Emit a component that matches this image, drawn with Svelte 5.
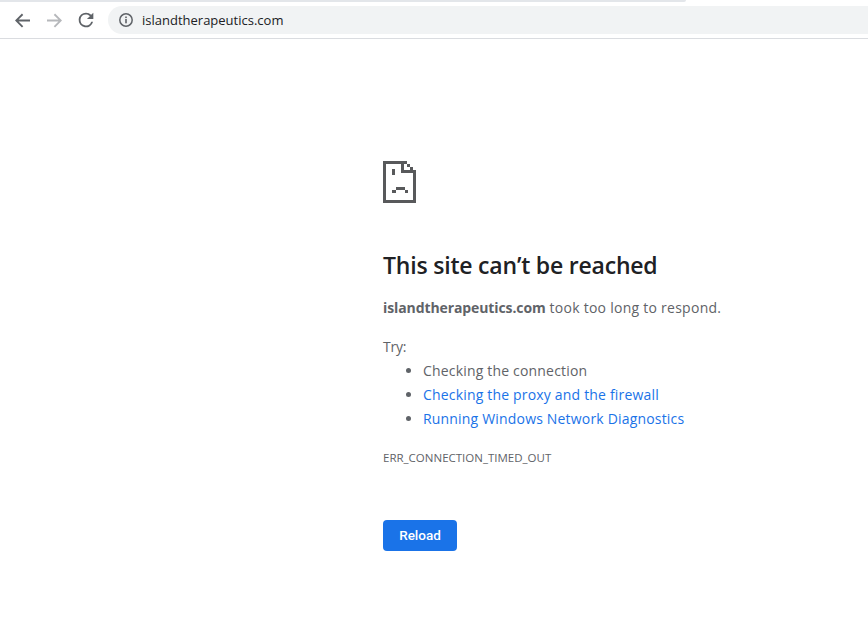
<script>
  let host = "islandtherapeutics.com";
</script>

<div class="window">
  <div class="tab-edge"></div>
  <header class="toolbar">
    <button class="nav" aria-label="Back">
      <svg width="15" height="15" viewBox="0 0 16 16"><path d="M16 7H3.800l5-5L7.400.6 0 8l7.400 7.400 1.400-1.400-5-5H16z" fill="#5f6368" /></svg>
    </button>
    <button class="nav" aria-label="Forward">
      <svg width="15" height="15" viewBox="0 0 16 16"><path d="M0 7h12.200l-5-5L8.600.6 16 8l-7.400 7.400-1.400-1.400 5-5H0z" fill="#b6b8bb" /></svg>
    </button>
    <button class="nav" aria-label="Reload">
      <svg width="22" height="22" viewBox="0 0 24 24"><path d="M17.650 6.350A7.960 7.960 0 0 0 12 4a8 8 0 1 0 7.730 10h-2.080A6 6 0 1 1 12 6c1.660 0 3.140.69 4.220 1.780L13 11h7V4z" fill="#5f6368" /></svg>
    </button>
    <div class="omnibox">
      <svg width="16" height="16" viewBox="0 0 16 16">
        <circle cx="8" cy="8" r="6.200" fill="none" stroke="#5f6368" stroke-width="1.500" />
        <rect x="7.200" y="7" width="1.600" height="4.300" fill="#5f6368" />
        <rect x="7.200" y="4.500" width="1.600" height="1.600" fill="#5f6368" />
      </svg>
      <span>{host}</span>
    </div>
  </header>

  <main class="content">
    <svg class="sad-page" width="34" height="42" viewBox="0 0 34 42" shape-rendering="crispEdges" fill="#58595b">
      <rect x="0" y="0" width="3" height="42" />
      <rect x="0" y="0" width="21" height="3" />
      <rect x="0" y="39" width="33" height="3" />
      <rect x="30" y="9" width="3" height="33" />
      <rect x="18" y="0" width="3" height="12" />
      <rect x="18" y="9" width="15" height="3" />
      <rect x="21" y="0" width="3" height="3" />
      <rect x="24" y="3" width="3" height="3" />
      <rect x="27" y="6" width="3" height="3" />
      <rect x="9" y="8" width="3" height="6" />
      <rect x="9" y="29" width="4" height="3" />
      <rect x="13" y="26" width="9" height="3" />
      <rect x="22" y="29" width="3" height="3" />
    </svg>

    <h1>This site can’t be reached</h1>
    <p class="summary"><strong>{host}</strong> took too long to respond.</p>
    <p class="try">Try:</p>
    <ul>
      <li>Checking the connection</li>
      <li><a href="#proxy">Checking the proxy and the firewall</a></li>
      <li><a href="#diagnostics">Running Windows Network Diagnostics</a></li>
    </ul>
    <div class="code">ERR_CONNECTION_TIMED_OUT</div>
    <button class="reload">Reload</button>
  </main>
</div>

<style>
  :global(body) {
    background: #fff;
  }

  .window {
    position: relative;
    width: 868px;
    height: 624px;
    overflow: hidden;
    font-family: "Open Sans", "Noto Sans", sans-serif;
  }

  .tab-edge {
    position: absolute;
    top: 0;
    left: 0;
    width: 686px;
    height: 2px;
    background: #e3e6ea;
    border-bottom-right-radius: 4px;
  }

  .toolbar {
    height: 36px;
    border-bottom: 1px solid #dadce0;
    display: flex;
    align-items: center;
    padding-left: 6px;
    padding-top: 2px;
  }

  .nav {
    width: 32px;
    height: 28px;
    border: none;
    background: none;
    padding: 0;
    display: flex;
    align-items: center;
    justify-content: center;
  }

  .omnibox {
    margin-left: 6px;
    flex: 1;
    height: 28px;
    background: #f1f3f4;
    border-radius: 14px 0 0 14px;
    display: flex;
    align-items: center;
    gap: 8px;
    padding-left: 10px;
    font-size: 13px;
    color: #202124;
  }

  .content {
    padding: 122px 0 0 383px;
    color: #5f6368;
    font-size: 14px;
    letter-spacing: 0.18px;
  }

  .sad-page {
    display: block;
  }

  h1 {
    margin: 46px 0 0;
    font-size: 23px;
    font-weight: 600;
    line-height: 32px;
    color: #202124;
    letter-spacing: -0.2px;
  }

  .summary {
    margin: 15px 0 0;
    line-height: 24px;
    letter-spacing: 0.26px;
  }

  .summary strong {
    font-weight: 700;
    letter-spacing: -0.1px;
  }

  .try {
    margin: 15px 0 0;
    line-height: 24px;
    letter-spacing: -0.2px;
  }

  ul {
    margin: 0;
    padding-left: 40px;
    line-height: 24px;
  }

  a {
    color: #1a73e8;
    text-decoration: none;
  }

  .code {
    margin-top: 19px;
    font-size: 11.500px;
    line-height: 16px;
    letter-spacing: 0;
  }

  .reload {
    display: block;
    margin-top: 54px;
    width: 74px;
    height: 31px;
    background: #1a73e8;
    color: #fff;
    border: none;
    border-radius: 4px;
    font-family: Roboto, sans-serif;
    font-size: 13.500px;
    font-weight: 500;
    padding: 0 0 2px;
  }
</style>
